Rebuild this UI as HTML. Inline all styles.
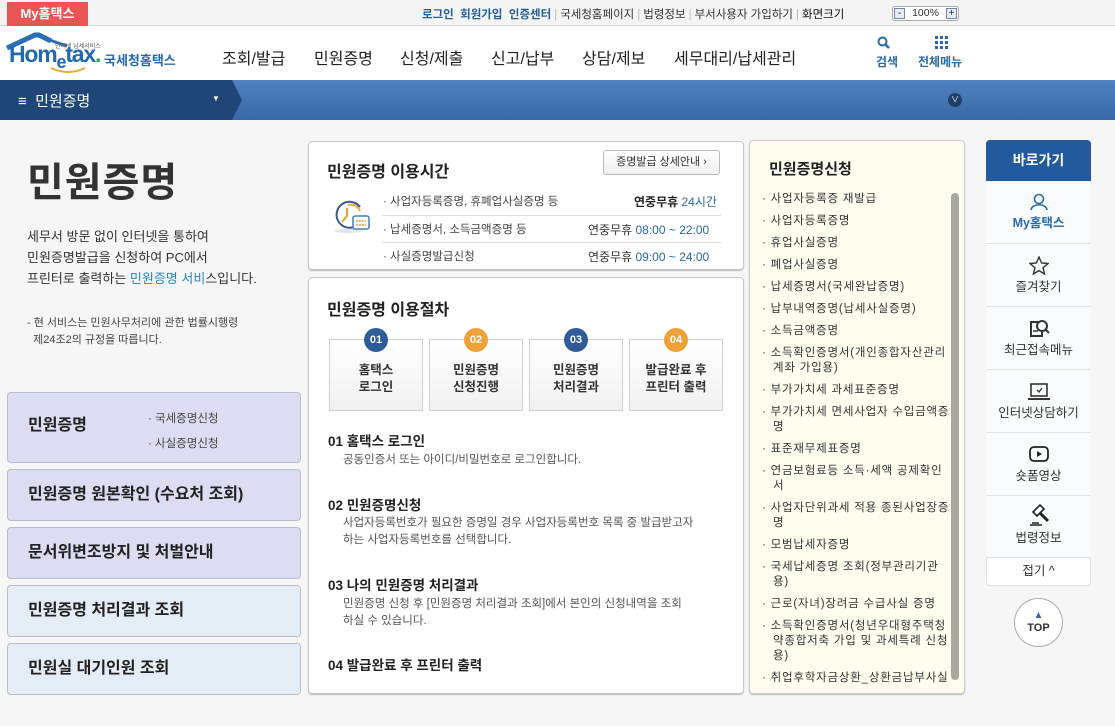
<!DOCTYPE html>
<html><head><meta charset="utf-8">
<style>
*{margin:0;padding:0;box-sizing:border-box}
body{width:1115px;height:726px;overflow:hidden;position:relative;font-family:"Liberation Sans","Noto Sans CJK KR",sans-serif;color:#222;background:#f6f6f6}
.a{position:absolute}
.top{left:0;top:0;width:1115px;height:26px;background:#f4f4f4;border-bottom:1px solid #dcdcdc}
.toplinks{top:6px;left:422px;font-size:11.5px;color:#333;white-space:nowrap}
.toplinks b{color:#245f98}
.toplinks .s{color:#bbb;margin:0 3px}
.hdr{left:0;top:26px;width:1115px;height:54px;background:#fff}
.nav{top:45px;font-size:16px;color:#222;white-space:nowrap}
.bar{left:0;top:80px;width:1115px;height:40px;background:linear-gradient(#4f82c0,#3a68a6)}
.panel{background:#fff;border:1px solid #c8c8c8;border-radius:4px;box-shadow:0 1px 1px #bbb}
.lbox{left:7px;width:294px;border:1px solid #b8bccc;border-radius:4px;font-size:16px;font-weight:bold;color:#222;padding-left:20px}
.step{width:94px;height:72px;top:339px;border:1px solid #d0d0d0;background:linear-gradient(#fff,#f1f1f1);text-align:center;font-size:12.5px;font-weight:bold;color:#333;padding-top:22px;line-height:17px}
.num{width:24px;height:24px;border-radius:12px;top:328px;color:#fff;font-size:11px;font-weight:bold;text-align:center;line-height:24px}
.hd{font-size:13.5px;font-weight:bold;color:#222}
.tx{font-size:11.5px;color:#555;line-height:17px}
.list{left:762px;top:192px;width:188px;font-size:11.5px;color:#333;line-height:15px;letter-spacing:0.8px}
.list div{padding-left:11px;text-indent:-11px;margin-bottom:7px}
.q{left:986px;width:105px;background:#f9fbfd;border-bottom:1px solid #dde3ea;text-align:center;font-size:12.5px;color:#333}
</style></head><body>
<div class="a top"></div>
<div class="a" style="left:7px;top:2px;width:81px;height:24px;background:#e95454;color:#fff;font-size:13px;font-weight:bold;text-align:center;line-height:23px">My홈택스</div>
<div class="a toplinks"><b>로그인</b>&nbsp; <b>회원가입</b>&nbsp; <b>인증센터</b><span class="s">|</span>국세청홈페이지<span class="s">|</span>법령정보<span class="s">|</span>부서사용자 가입하기<span class="s">|</span><span style="color:#111">화면크기</span></div>
<div class="a" style="left:892px;top:6px;width:67px;height:15px;border:1px solid #aaa;border-radius:3px;background:#fff;font-size:10.5px;line-height:13px;text-align:center;color:#333">100%</div>
<div class="a" style="left:894px;top:8px;width:11px;height:11px;border:1px solid #6a88b0;background:#e4ecf6;font-size:10px;line-height:9px;text-align:center">-</div>
<div class="a" style="left:946px;top:8px;width:11px;height:11px;border:1px solid #6a88b0;background:#e4ecf6;font-size:10px;line-height:9px;text-align:center">+</div>
<div class="a hdr"></div>
<svg class="a" style="left:5px;top:32px" width="90" height="20"><path d="M2 16 L30 3 L34 3 L46 9" stroke="#2a6eb5" stroke-width="5" fill="none"/><path d="M30 3 L62 14" stroke="#2a6eb5" stroke-width="3" fill="none"/></svg>
<svg class="a" style="left:48px;top:66px" width="40" height="10"><path d="M3 2 Q20 10 37 2" stroke="#f0a830" stroke-width="2" fill="none"/></svg>
<div class="a" style="left:9px;top:41px;font-size:23px;font-weight:bold;color:#2368b0;letter-spacing:-1.2px">Hom<span style="font-size:18px;position:relative;top:6px">e</span>tax<span style="color:#2aa060">.</span></div>
<div class="a" style="left:55px;top:41px;font-size:6px;color:#555">인터넷 납세서비스</div>
<div class="a" style="left:104px;top:50px;font-size:13px;font-weight:bold;color:#2368b0">국세청홈택스</div>
<div class="a nav" style="left:222px">조회/발급</div>
<div class="a nav" style="left:314px">민원증명</div>
<div class="a nav" style="left:400px">신청/제출</div>
<div class="a nav" style="left:491px">신고/납부</div>
<div class="a nav" style="left:582px">상담/제보</div>
<div class="a nav" style="left:674px">세무대리/납세관리</div>
<svg class="a" style="left:877px;top:36px" width="14" height="14"><circle cx="5.5" cy="5.5" r="4" stroke="#2a6aa6" stroke-width="2" fill="none"/><path d="M8.5 8.5 L12 12" stroke="#2a6aa6" stroke-width="2.5"/></svg>
<div class="a" style="left:876px;top:53px;font-size:12px;color:#2a6aa6;font-weight:bold">검색</div>
<svg class="a" style="left:935px;top:36px" width="13" height="13" fill="#2a6aa6"><rect x="0" y="0" width="3" height="3"/><rect x="5" y="0" width="3" height="3"/><rect x="10" y="0" width="3" height="3"/><rect x="0" y="5" width="3" height="3"/><rect x="5" y="5" width="3" height="3"/><rect x="10" y="5" width="3" height="3"/><rect x="0" y="10" width="3" height="3"/><rect x="5" y="10" width="3" height="3"/><rect x="10" y="10" width="3" height="3"/></svg>
<div class="a" style="left:918px;top:53px;font-size:12px;color:#2a6aa6;font-weight:bold">전체메뉴</div>
<div class="a bar"></div>
<svg class="a" style="left:0;top:80px" width="245" height="40"><path d="M0 0 H232 L242 20 L232 40 H0Z" fill="#1f4677"/></svg>
<div class="a" style="left:18px;top:90px;font-size:15px;color:#fff">≡&nbsp; 민원증명</div>
<div class="a" style="left:212px;top:94px;font-size:8px;color:#fff">▼</div>
<div class="a" style="left:948px;top:93px;width:14px;height:14px;border-radius:7px;background:#1f3f66;color:#fff;font-size:8px;text-align:center;line-height:14px">∨</div>

<div class="a" style="left:27px;top:150px;font-size:40px;color:#333;font-weight:bold;letter-spacing:1px">민원증명</div>
<div class="a" style="left:27px;top:226px;font-size:13px;color:#333;line-height:21px">세무서 방문 없이 인터넷을 통하여<br>민원증명발급을 신청하여 PC에서<br>프린터로 출력하는 <span style="color:#2a86c2">민원증명 서비</span>스입니다.</div>
<div class="a" style="left:27px;top:315px;font-size:11px;color:#444;line-height:17px">- 현 서비스는 민원사무처리에 관한 법률시행령<br>&nbsp;&nbsp;제24조2의 규정을 따릅니다.</div>

<div class="a lbox" style="top:392px;height:71px;background:#dcdcf2;padding-top:18px">민원증명</div>
<div class="a" style="left:148px;top:407px;font-size:11.5px;color:#444;line-height:25px">· 국세증명신청<br>· 사실증명신청</div>
<div class="a lbox" style="top:469px;height:52px;background:#dcdcf2;line-height:50px">민원증명 원본확인 (수요처 조회)</div>
<div class="a lbox" style="top:527px;height:52px;background:#dcdcf2;line-height:50px">문서위변조방지 및 처벌안내</div>
<div class="a lbox" style="top:585px;height:52px;background:#e4ecf5;line-height:50px">민원증명 처리결과 조회</div>
<div class="a lbox" style="top:643px;height:52px;background:#e4ecf5;line-height:50px">민원실 대기인원 조회</div>

<div class="a panel" style="left:308px;top:141px;width:436px;height:129px"></div>
<div class="a" style="left:327px;top:158px;font-size:16px;font-weight:bold;color:#222">민원증명 이용시간</div>
<div class="a" style="left:603px;top:150px;width:117px;height:25px;border:1px solid #bbb;border-radius:3px;background:linear-gradient(#fff,#f0f0f0);font-size:11px;text-align:center;line-height:22px;color:#333">증명발급 상세안내 ›</div>
<svg class="a" style="left:332px;top:199px" width="40" height="36"><ellipse cx="16" cy="32" rx="14" ry="2" fill="#dde6f0"/><path d="M28 8 A13 13 0 1 0 22 28" stroke="#3a5a88" stroke-width="2" fill="none"/><path d="M16 6 A10 10 0 0 1 28 12" stroke="#f0a83a" stroke-width="2" fill="none"/><path d="M15 9 V17 L10 23" stroke="#f0a030" stroke-width="2" fill="none"/><rect x="21" y="17" width="16" height="13" rx="2" fill="#fff" stroke="#4a7ab8" stroke-width="1.5"/><path d="M24 22h10M24 26h10" stroke="#f0a030" stroke-width="1.5" stroke-dasharray="2 1"/></svg>
<div class="a" style="left:383px;top:193px;font-size:11.5px;color:#444">· 사업자등록증명, 휴폐업사실증명 등</div>
<div class="a" style="left:634px;top:193px;font-size:12px;font-weight:bold;color:#222">연중무휴 <span style="color:#2a6a9e;font-weight:normal">24시간</span></div>
<div class="a" style="left:382px;top:215px;width:339px;border-top:1px solid #ddd"></div>
<div class="a" style="left:383px;top:221px;font-size:11.5px;color:#444">· 납세증명서, 소득금액증명 등</div>
<div class="a" style="left:588px;top:221px;font-size:12px;color:#333">연중무휴 <span style="color:#2a6a9e">08:00 ~ 22:00</span></div>
<div class="a" style="left:382px;top:242px;width:339px;border-top:1px solid #ddd"></div>
<div class="a" style="left:383px;top:248px;font-size:11.5px;color:#444">· 사실증명발급신청</div>
<div class="a" style="left:588px;top:248px;font-size:12px;color:#333">연중무휴 <span style="color:#2a6a9e">09:00 ~ 24:00</span></div>

<div class="a panel" style="left:308px;top:277px;width:436px;height:417px"></div>
<div class="a" style="left:327px;top:296px;font-size:16px;font-weight:bold;color:#222">민원증명 이용절차</div>
<div class="a step" style="left:329px">홈택스<br>로그인</div>
<div class="a step" style="left:429px">민원증명<br>신청진행</div>
<div class="a step" style="left:529px">민원증명<br>처리결과</div>
<div class="a step" style="left:629px">발급완료 후<br>프린터 출력</div>
<div class="a num" style="left:364px;background:#2d5c98">01</div>
<div class="a num" style="left:464px;background:#f0a038">02</div>
<div class="a num" style="left:564px;background:#2d5c98">03</div>
<div class="a num" style="left:664px;background:#f0a038">04</div>
<div class="a hd" style="left:328px;top:430px">01 홈택스 로그인</div>
<div class="a tx" style="left:343px;top:452px">공동인증서 또는 아이디/비밀번호로 로그인합니다.</div>
<div class="a hd" style="left:328px;top:494px">02 민원증명신청</div>
<div class="a tx" style="left:343px;top:515px">사업자등록번호가 필요한 증명일 경우 사업자등록번호 목록 중 발급받고자<br>하는 사업자등록번호를 선택합니다.</div>
<div class="a hd" style="left:328px;top:574px">03 나의 민원증명 처리결과</div>
<div class="a tx" style="left:343px;top:596px">민원증명 신청 후 [민원증명 처리결과 조회]에서 본인의 신청내역을 조회<br>하실 수 있습니다.</div>
<div class="a hd" style="left:328px;top:654px">04 발급완료 후 프린터 출력</div>

<div class="a" style="left:749px;top:140px;width:216px;height:554px;background:#fffdf0;border:1px solid #ccc;border-radius:4px;box-shadow:0 1px 1px #bbb"></div>
<div class="a" style="left:769px;top:158px;font-size:15px;font-weight:bold;color:#222">민원증명신청</div>
<div class="a" style="left:951px;top:193px;width:8px;height:487px;background:#a8a8a0;border-radius:4px"></div>
<div class="a list">
<div>· 사업자등록증 재발급</div><div>· 사업자등록증명</div><div>· 휴업사실증명</div><div>· 폐업사실증명</div><div>· 납세증명서(국세완납증명)</div><div>· 납부내역증명(납세사실증명)</div><div>· 소득금액증명</div><div>· 소득확인증명서(개인종합자산관리계좌 가입용)</div><div>· 부가가치세 과세표준증명</div><div>· 부가가치세 면세사업자 수입금액증명</div><div>· 표준재무제표증명</div><div>· 연금보험료등 소득·세액 공제확인서</div><div>· 사업자단위과세 적용 종된사업장증명</div><div>· 모범납세자증명</div><div>· 국세납세증명 조회(정부관리기관용)</div><div>· 근로(자녀)장려금 수급사실 증명</div><div>· 소득확인증명서(청년우대형주택청약종합저축 가입 및 과세특례 신청용)</div><div>· 취업후학자금상환_상환금납부사실증명서</div>
</div>
<div class="a" style="left:749px;top:686px;width:216px;height:40px;background:#f6f6f6"></div>
<div class="a" style="left:749px;top:686px;width:216px;height:8px;background:#fffdf0;border:1px solid #ccc;border-top:none;border-radius:0 0 4px 4px;box-shadow:0 1px 1px #bbb"></div>

<div class="a" style="left:986px;top:140px;width:105px;height:446px;border:1px solid #dde3ea;border-radius:4px;background:#fff"></div>
<div class="a" style="left:986px;top:140px;width:105px;height:41px;background:#235a9e;border-radius:4px 4px 0 0;color:#fff;font-size:14px;font-weight:bold;text-align:center;line-height:41px">바로가기</div>
<div class="a q" style="top:181px;height:63px;padding-top:12px"><svg width="18" height="18"><circle cx="9" cy="6" r="4.5" stroke="#2a6aa6" stroke-width="1.6" fill="none"/><path d="M1 17 C2 10 16 10 17 17" stroke="#2a6aa6" stroke-width="1.6" fill="none"/></svg><div style="color:#2a6aa6;font-weight:bold;margin-top:-2px">My홈택스</div></div>
<div class="a q" style="top:244px;height:63px;padding-top:12px"><svg width="20" height="19"><path d="M10 1 L12.6 7 L19 7.5 L14 11.7 L15.6 18 L10 14.6 L4.4 18 L6 11.7 L1 7.5 L7.4 7Z" stroke="#333" stroke-width="1.4" fill="none"/></svg><div style="margin-top:-2px">즐겨찾기</div></div>
<div class="a q" style="top:307px;height:63px;padding-top:12px"><svg width="22" height="19"><path d="M10 3H3V17H14V13" stroke="#333" stroke-width="2" fill="none"/><circle cx="14" cy="7" r="5" stroke="#333" stroke-width="2" fill="none"/><path d="M17.5 10.5L21 14" stroke="#333" stroke-width="2"/><path d="M5 12h5" stroke="#333" stroke-width="1.5"/></svg><div style="margin-top:-2px">최근접속메뉴</div></div>
<div class="a q" style="top:370px;height:63px;padding-top:12px"><svg width="24" height="19"><rect x="4" y="2" width="16" height="12" stroke="#333" stroke-width="1.6" fill="none"/><path d="M1 17H23" stroke="#333" stroke-width="2"/><path d="M10 8l2 2 3-4" stroke="#333" stroke-width="1.3" fill="none"/></svg><div style="margin-top:-2px">인터넷상담하기</div></div>
<div class="a q" style="top:433px;height:63px;padding-top:12px"><svg width="22" height="19"><rect x="2" y="2" width="18" height="14" rx="4" stroke="#222" stroke-width="1.8" fill="none"/><path d="M9 6V12L14 9Z" fill="#222"/></svg><div style="margin-top:-2px">숏폼영상</div></div>
<div class="a q" style="top:496px;height:62px;padding-top:8px"><svg width="24" height="24"><path d="M6 8 L13 1 L17 5 L10 12Z" stroke="#222" stroke-width="1.6" fill="none"/><path d="M13 9L21 17" stroke="#222" stroke-width="3"/><path d="M3 21H15M5 19H12" stroke="#222" stroke-width="1.6"/></svg><div style="margin-top:-4px">법령정보</div></div>
<div class="a" style="left:987px;top:558px;width:103px;height:27px;background:#fff;text-align:center;font-size:12.5px;color:#333;line-height:27px;border-radius:0 0 4px 4px">접기 ^</div>
<div class="a" style="left:1014px;top:598px;width:49px;height:49px;border-radius:50%;border:1px solid #aaa;background:#fff;text-align:center;font-size:11px;font-weight:bold;color:#333;padding-top:10px;line-height:12px"><span style="color:#2a6ab0;font-size:10px">▲</span><br>TOP</div>
</body></html>
